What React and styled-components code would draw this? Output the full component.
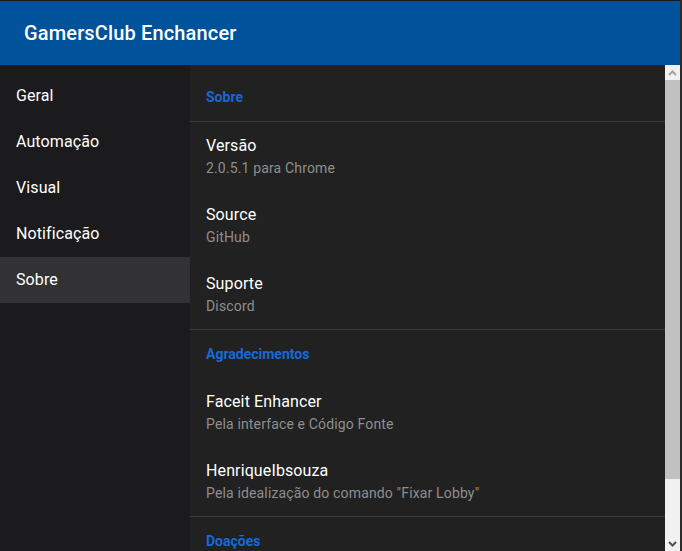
import React from 'react';
import styled, { createGlobalStyle } from 'styled-components';

const GlobalStyle = createGlobalStyle`
	html, body {
		margin: 0;
		padding: 0;
		background: #2a2a2a;
		font-family: Roboto, "Noto Sans", "Liberation Sans", sans-serif;
		-webkit-font-smoothing: antialiased;
	}
	* {
		box-sizing: border-box;
	}
`;

const Window = styled.div`
	width: 680px;
	height: 551px;
	border-top: 1px solid #18191b;
	display: flex;
	flex-direction: column;
	overflow: hidden;
`;

const Header = styled.header`
	flex: 0 0 64px;
	display: flex;
	align-items: center;
	padding: 0 24px;
	background-color: #00529a;
	color: #fff;
`;

const Title = styled.h1`
	margin: 0;
	font-size: 20px;
	font-weight: 500;
	letter-spacing: 0.15px;
`;

const Body = styled.div`
	flex: 1;
	display: flex;
	min-height: 0;
`;

const Sidebar = styled.nav`
	flex: 0 0 190px;
	padding-top: 8px;
	background-color: #1b1b1d;
	display: flex;
	flex-direction: column;
`;

const NavItem = styled.a`
	flex: 0 0 46px;
	display: flex;
	align-items: center;
	padding: 0 16px 2px;
	font-size: 16px;
	letter-spacing: 0.1px;
	color: #fff;
	text-decoration: none;
	background-color: ${p => (p.$active ? '#323234' : 'transparent')};
	cursor: pointer;
`;

const Content = styled.main`
	flex: 1;
	padding-top: 8px;
	background-color: #212121;
	overflow: hidden;
`;

const ScrollBar = styled.div`
	flex: 0 0 15px;
	display: flex;
	flex-direction: column;
	background-color: #f1f1f1;
`;

const ScrollButton = styled.div`
	flex: 0 0 15px;
	display: flex;
	align-items: center;
	justify-content: center;
`;

const ScrollTrack = styled.div`
	flex: 1;
	display: flex;
	flex-direction: column;
`;

const ScrollThumb = styled.div`
	background-color: #c1c1c1;
`;

const SectionTitle = styled.h3`
	margin: 0;
	height: 48px;
	display: flex;
	align-items: center;
	padding: 0 16px;
	font-size: 14px;
	font-weight: 700;
	color: #1769d6;
`;

const Divider = styled.hr`
	margin: 0;
	border: 0;
	border-top: 1px solid #3c3c3c;
`;

const Item = styled.div`
	height: 69px;
	padding: 13px 16px 0;
`;

const ItemTitle = styled.div`
	font-size: 16px;
	line-height: 22px;
	letter-spacing: 0.12px;
	color: #fff;
`;

const ItemText = styled.div`
	font-size: 14px;
	line-height: 23px;
	letter-spacing: 0.15px;
	color: #8e8e8e;
`;

const Chevron = ({ down, color }) => (
	<svg width="9" height="6" viewBox="0 0 9 6">
		<path
			d={down ? 'M1 1 L4.5 4.5 L8 1' : 'M1 5 L4.5 1.5 L8 5'}
			fill="none"
			stroke={color}
			strokeWidth="2"
		/>
	</svg>
);

const menu = ['Geral', 'Automação', 'Visual', 'Notificação', 'Sobre'];

const sobre = [
	{ title: 'Versão', text: '2.0.5.1 para Chrome' },
	{ title: 'Source', text: 'GitHub' },
	{ title: 'Suporte', text: 'Discord' },
];

const agradecimentos = [
	{ title: 'Faceit Enhancer', text: 'Pela interface e Código Fonte' },
	{ title: 'HenriqueIbsouza', text: 'Pela idealização do comando "Fixar Lobby"' },
];

const renderItems = list => list.map(item => (
	<Item key={item.title}>
		<ItemTitle>{item.title}</ItemTitle>
		<ItemText>{item.text}</ItemText>
	</Item>
));

export default function App() {
	// visible part of the settings list, as a share of its full height
	const visible = 486 / 555;

	return (
		<>
			<GlobalStyle />
			<Window>
				<Header>
					<Title>GamersClub Enchancer</Title>
				</Header>
				<Body>
					<Sidebar>
						{menu.map(name => (
							<NavItem key={name} $active={name === 'Sobre'}>{name}</NavItem>
						))}
					</Sidebar>
					<Content>
						<SectionTitle>Sobre</SectionTitle>
						<Divider />
						{renderItems(sobre)}
						<Divider />
						<SectionTitle>Agradecimentos</SectionTitle>
						{renderItems(agradecimentos)}
						<Divider />
						<SectionTitle>Doações</SectionTitle>
					</Content>
					<ScrollBar>
						<ScrollButton><Chevron color="#a3a3a3" /></ScrollButton>
						<ScrollTrack>
							<ScrollThumb style={{ height: `${visible * 100}%` }} />
						</ScrollTrack>
						<ScrollButton><Chevron down color="#505050" /></ScrollButton>
					</ScrollBar>
				</Body>
			</Window>
		</>
	);
}
